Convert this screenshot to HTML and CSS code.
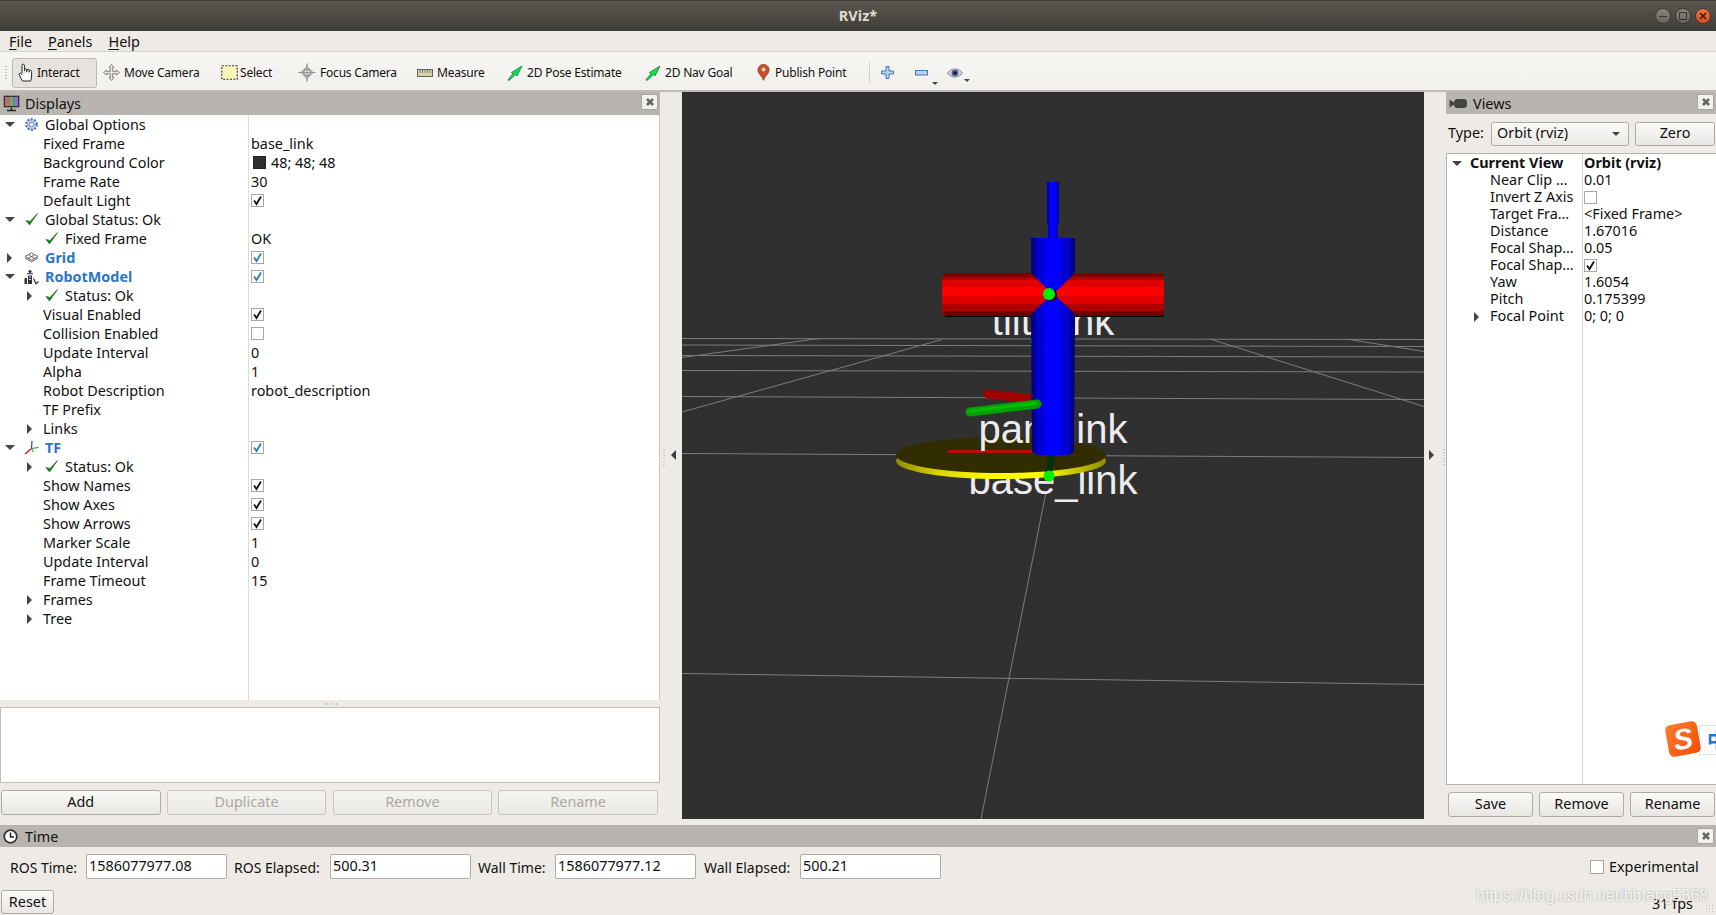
FILE: index.html
```html
<!DOCTYPE html>
<html lang="en">
<head>
<meta charset="utf-8">
<title>RViz*</title>
<link rel="stylesheet" href="styles.css">
</head>
<body>
<svg class="defs" width="0" height="0">
  <symbol id="ok" viewBox="0 0 15 15"><path d="M2 8.500 L5.500 13 L13.500 1.500 L6 9.500 Z" fill="#1f7a25" stroke="#1f7a25" stroke-width=".8"/></symbol>
  <symbol id="close" viewBox="0 0 10 10"><path d="M2 2 L8 8 M8 2 L2 8" stroke="#666" stroke-width="2.6"/></symbol>
  <symbol id="tick" viewBox="0 0 13 13"><path d="M3 6.500 L5.500 10 L10 2.500" fill="none" stroke="currentColor" stroke-width="1.8"/></symbol>
  <symbol id="navarrow" viewBox="0 0 16 16"><path d="M1 15 L6 8.500 L4.500 7.500 L15 1 L10 11 L8.500 9.500 L2 15.500 Z" fill="#0ee04a" stroke="#0b6b22" stroke-width=".7"/></symbol>
</svg>

<header class="titlebar">
  <span class="title">RViz*</span>
  <div class="winbtns">
    <span class="wb"><i class="wb-min"></i></span>
    <span class="wb"><i class="wb-max"></i></span>
    <span class="wb wb-close">
      <svg width="10" height="10" viewBox="0 0 10 10"><path d="M2 2 L8 8 M8 2 L2 8" stroke="#3a2010" stroke-width="1.6"/></svg>
    </span>
  </div>
</header>

<nav class="menubar">
  <span class="menu"><u>F</u>ile</span>
  <span class="menu"><u>P</u>anels</span>
  <span class="menu"><u>H</u>elp</span>
</nav>

<div class="toolbar">
  <span class="grip"></span>
  <div class="tools">
    <div class="tool-cell"><div class="tool active">
      <svg width="17" height="19" viewBox="0 0 17 19"><path d="M4 10 V2.400 a1.200 1.200 0 0 1 2.400 0 V8 M6.400 7 a1.200 1.200 0 0 1 2.400 0 V9 M8.800 7.600 a1.200 1.200 0 0 1 2.400 0 V9.400 M11.200 8.400 a1.200 1.200 0 0 1 2.400 0 V14 l-1 4 H4.500 L1 11.500 a1.200 1.200 0 0 1 2-1 L4 12" fill="#fff" stroke="#222" stroke-width="1"/></svg>
      <span>Interact</span></div></div>
    <div class="tool">
      <svg width="17" height="17" viewBox="0 0 17 17"><path d="M8.500 .5 L11 3.500 H9.700 V7.300 H13.500 V6 L16.500 8.500 L13.500 11 V9.700 H9.700 V13.500 H11 L8.500 16.500 L6 13.500 H7.300 V9.700 H3.500 V11 L.5 8.500 L3.500 6 V7.300 H7.300 V3.500 H6 Z" fill="#e8e8e8" stroke="#777" stroke-width=".9"/></svg>
      <span>Move Camera</span></div>
    <div class="tool tool-sel">
      <svg width="17" height="15" viewBox="0 0 17 15"><rect x=".8" y=".8" width="15.400" height="13.400" fill="#fbf6b8" stroke="#333" stroke-width="1.100" stroke-dasharray="2 1.400"/></svg>
      <span>Select</span></div>
    <div class="tool">
      <svg width="18" height="19" viewBox="0 0 18 19"><path d="M9 .5 V18.500 M.5 9.500 H17.500" stroke="#888" stroke-width="1.200"/><path d="M9 3.500 L15 9.500 L9 15.500 L3 9.500 Z" fill="#e6e6e6" stroke="#888"/><circle cx="9" cy="9.500" r="3.400" fill="none" stroke="#777"/><path d="M9 4 V15 M3.500 9.500 H14.500" stroke="#888" stroke-width=".8"/></svg>
      <span>Focus Camera</span></div>
    <div class="tool">
      <svg width="16" height="8" viewBox="0 0 16 8"><rect x=".5" y=".5" width="15" height="7" fill="#d8d2a6" stroke="#666"/><path d="M3 1 V4 M5.500 1 V4 M8 1 V4 M10.500 1 V4 M13 1 V4" stroke="#666" stroke-width=".8"/></svg>
      <span>Measure</span></div>
    <div class="tool">
      <svg width="16" height="16"><use href="#navarrow"/></svg>
      <span>2D Pose Estimate</span></div>
    <div class="tool">
      <svg width="16" height="16"><use href="#navarrow"/></svg>
      <span>2D Nav Goal</span></div>
    <div class="tool tool-pin">
      <svg width="13" height="17" viewBox="0 0 13 17"><path d="M6.500 16.500 C5 12 .8 9.500 .8 6 a5.700 5.700 0 0 1 11.400 0 C12.200 9.500 8 12 6.500 16.500 Z" fill="#c4502c" stroke="#7c3a1c" stroke-width=".6"/><circle cx="6.500" cy="5.500" r="2" fill="#f0d0b8"/></svg>
      <span>Publish Point</span></div>
    <span class="tool-sep"></span>
    <div class="tool-icon">
      <svg width="13" height="13" viewBox="0 0 13 13"><path d="M5 .5 H8 V5 H12.500 V8 H8 V12.500 H5 V8 H.5 V5 H5 Z" fill="#b8d0ec" stroke="#3d78b8"/></svg></div>
    <div class="tool-icon">
      <svg width="13" height="6" viewBox="0 0 13 6"><rect x=".5" y=".5" width="12" height="4.500" fill="#b8d0ec" stroke="#3d78b8"/></svg><b class="drop"></b></div>
    <div class="tool-icon">
      <svg width="16" height="12" viewBox="0 0 16 12"><path d="M.5 6 C4 .5 12 .5 15.500 6 C12 11.500 4 11.500 .5 6 Z" fill="#c9cfdc" stroke="#8a93a8"/><circle cx="8" cy="6" r="3.300" fill="#4a5a8a"/><circle cx="8" cy="6" r="1.400" fill="#111"/></svg><b class="drop"></b></div>
  </div>
</div>

<main class="main">
  <section class="left">
    <div class="dock-head">
      <svg class="dock-ico" width="17" height="17" viewBox="0 0 17 17"><rect x=".7" y=".7" width="15.600" height="11.600" fill="#333"/><rect x="2" y="2" width="4.400" height="9" fill="#c86a6a"/><rect x="6.400" y="2" width="4.300" height="9" fill="#6fae6f"/><rect x="10.700" y="2" width="4.300" height="9" fill="#7c7cc4"/><path d="M8.500 12.500 V15 M4 15.500 H13" stroke="#222" stroke-width="1.600"/></svg>
      <span class="dock-title">Displays</span>
      <span class="closebtn"><svg width="10" height="10"><use href="#close"/></svg></span>
    </div>
    <div class="tree tree-displays">
      <div class="row"><span class="name i0"><b class="tw down"></b><svg class="ico" width="15" height="15" viewBox="0 0 15 15"><circle cx="7.500" cy="7.500" r="5.200" fill="#d8e4f6" stroke="#4a78c8" stroke-width="2.400" stroke-dasharray="2 1.300"/><circle cx="7.500" cy="7.500" r="2.400" fill="#fff" stroke="#4a78c8"/></svg>Global Options</span></div>
      <div class="row"><span class="name p">Fixed Frame</span><span class="val">base_link</span></div>
      <div class="row"><span class="name p">Background Color</span><span class="val"><i class="swatch"></i>48; 48; 48</span></div>
      <div class="row"><span class="name p">Frame Rate</span><span class="val">30</span></div>
      <div class="row"><span class="name p">Default Light</span><span class="val"><span class="cb"><svg width="13" height="13"><use href="#tick"/></svg></span></span></div>
      <div class="row"><span class="name i0"><b class="tw down"></b><svg class="ico" width="15" height="15"><use href="#ok"/></svg>Global Status: Ok</span></div>
      <div class="row"><span class="name i1"><b class="tw"></b><svg class="ico" width="15" height="15"><use href="#ok"/></svg>Fixed Frame</span><span class="val">OK</span></div>
      <div class="row"><span class="name i0 strong"><b class="tw right"></b><svg class="ico" width="15" height="11" viewBox="0 0 15 11"><path d="M7.500 .8 L14 4.500 L7.500 8.200 L1 4.500 Z M4.500 2.800 L11 6.500 M10.500 2.800 L4 6.500 M1 6 L7.500 9.800 L14 6" fill="none" stroke="#555" stroke-width=".9"/></svg>Grid</span><span class="val"><span class="cb blue"><svg width="13" height="13"><use href="#tick"/></svg></span></span></div>
      <div class="row"><span class="name i0 strong"><b class="tw down"></b><svg class="ico" width="15" height="16" viewBox="0 0 15 16"><circle cx="6" cy="2.500" r="1.600" fill="#335"/><path d="M3 4.700 H9" stroke="#335" stroke-width="1"/><path d="M.5 15 V9 H3 V15 Z M4 15 V6.500 H8 V15 Z" fill="#333"/><path d="M5 8 H7 M5 10.500 H7" stroke="#fff" stroke-width=".8"/><path d="M9.500 9.500 L12 14.800 L14.500 12.500" fill="none" stroke="#333" stroke-width="1.200"/></svg>RobotModel</span><span class="val"><span class="cb blue"><svg width="13" height="13"><use href="#tick"/></svg></span></span></div>
      <div class="row"><span class="name i1"><b class="tw right"></b><svg class="ico" width="15" height="15"><use href="#ok"/></svg>Status: Ok</span></div>
      <div class="row"><span class="name p">Visual Enabled</span><span class="val"><span class="cb"><svg width="13" height="13"><use href="#tick"/></svg></span></span></div>
      <div class="row"><span class="name p">Collision Enabled</span><span class="val"><span class="cb"></span></span></div>
      <div class="row"><span class="name p">Update Interval</span><span class="val">0</span></div>
      <div class="row"><span class="name p">Alpha</span><span class="val">1</span></div>
      <div class="row"><span class="name p">Robot Description</span><span class="val">robot_description</span></div>
      <div class="row"><span class="name p">TF Prefix</span></div>
      <div class="row"><span class="name i1 t"><b class="tw right"></b>Links</span></div>
      <div class="row"><span class="name i0 strong"><b class="tw down"></b><svg class="ico" width="15" height="15" viewBox="0 0 15 15"><path d="M7.500 8.500 L14.500 7.500" stroke="#1a9a3a" stroke-width="1.200"/><path d="M7.500 8.500 L8 1" stroke="#2a3ac8" stroke-width="1.200"/><path d="M7.500 8.500 L1 14" stroke="#d81818" stroke-width="1.400"/><path d="M7.500 8.500 L9.500 12" stroke="#1fc81f" stroke-width="1.200"/></svg>TF</span><span class="val"><span class="cb blue"><svg width="13" height="13"><use href="#tick"/></svg></span></span></div>
      <div class="row"><span class="name i1"><b class="tw right"></b><svg class="ico" width="15" height="15"><use href="#ok"/></svg>Status: Ok</span></div>
      <div class="row"><span class="name p">Show Names</span><span class="val"><span class="cb"><svg width="13" height="13"><use href="#tick"/></svg></span></span></div>
      <div class="row"><span class="name p">Show Axes</span><span class="val"><span class="cb"><svg width="13" height="13"><use href="#tick"/></svg></span></span></div>
      <div class="row"><span class="name p">Show Arrows</span><span class="val"><span class="cb"><svg width="13" height="13"><use href="#tick"/></svg></span></span></div>
      <div class="row"><span class="name p">Marker Scale</span><span class="val">1</span></div>
      <div class="row"><span class="name p">Update Interval</span><span class="val">0</span></div>
      <div class="row"><span class="name p">Frame Timeout</span><span class="val">15</span></div>
      <div class="row"><span class="name i1 t"><b class="tw right"></b>Frames</span></div>
      <div class="row"><span class="name i1 t"><b class="tw right"></b>Tree</span></div>
    </div>
    <div class="hsplit"><i class="dots-h"></i></div>
    <div class="desc"></div>
    <div class="btnrow btnrow-left">
      <button class="btn">Add</button>
      <button class="btn off">Duplicate</button>
      <button class="btn off">Remove</button>
      <button class="btn off">Rename</button>
    </div>
  </section>

  <div class="vsplit"><i class="dots-v"></i><b class="hide-l"></b></div>

  <div class="viewport">
    <svg class="scene" width="742" height="727" viewBox="0 0 742 727">
      <defs>
        <clipPath id="blueclip"><path d="M349 146 H393 V181 L371 202 L393 222 L392 360 L386 363 H356 L350 360 L349 222 L371 202 L349 181 Z"/></clipPath>
        <linearGradient id="band" x1="0" x2="1" y1="0" y2="0">
          <stop offset="0" stop-color="#8f8a00"/><stop offset=".2" stop-color="#d8d400"/><stop offset=".45" stop-color="#ffff00"/><stop offset=".7" stop-color="#ffff00"/><stop offset=".85" stop-color="#c8c400"/><stop offset="1" stop-color="#8f8a00"/>
        </linearGradient>
      </defs>
      <g class="gridl">
        <path d="M0 246.500 L742 247.500 M0 253 L742 254.500 M0 263.500 L742 265 M0 278.500 L742 280 M0 304.500 L742 307.500 M0 361.500 L742 365.500 M0 581.500 L742 592.500"/>
        <path d="M0 265.500 L137 246.500 M0 320 L260 247.500 M528 247 L742 314.500 M664 247 L742 259.500 M364 400 L299 727"/>
      </g>
      <text class="label" x="371" y="243" text-anchor="middle">tilt_link</text>
      <text class="label" x="371" y="402" text-anchor="middle">base_link</text>
      <ellipse cx="319" cy="369" rx="105" ry="18" fill="url(#band)"/>
      <ellipse cx="319" cy="363" rx="105" ry="18" fill="#322d00"/>
      <path d="M266 359.500 H351" stroke="#e00000" stroke-width="2.500"/>
      <text class="label" x="371" y="351" text-anchor="middle">pan_link</text>
      <path d="M306 302 L351 307" stroke="#a00000" stroke-width="9" stroke-linecap="round"/>
      <g>
        <rect x="260" y="185" width="222" height="38" fill="#b00000"/>
        <rect x="262" y="181" width="220" height="5" fill="#800000"/>
        <rect x="260" y="185" width="222" height="3" fill="#b00000"/>
        <rect x="260" y="188" width="222" height="7" fill="#e00000"/>
        <rect x="260" y="195" width="222" height="9" fill="#ff0000"/>
        <rect x="260" y="204" width="222" height="8" fill="#e00000"/>
        <rect x="260" y="212" width="222" height="7" fill="#b00000"/>
        <rect x="262" y="219" width="220" height="5" fill="#700000"/>
        <rect x="263" y="224" width="218" height="1" fill="#000"/>
      </g>
      <rect x="365" y="90" width="12" height="41" fill="#0000a0"/>
      <rect x="367" y="90" width="8" height="41" fill="#0000ff"/>
      <rect x="366" y="131" width="10" height="15" fill="#0000d0"/>
      <rect x="368" y="131" width="6" height="15" fill="#0000ff"/>
      <g clip-path="url(#blueclip)">
        <rect x="349" y="146" width="44" height="218" fill="#000088"/>
        <rect x="354" y="146" width="34" height="218" fill="#0000d0"/>
        <rect x="362" y="146" width="17" height="218" fill="#0000ff"/>
      </g>
      <path d="M288 320 L355 312" stroke="#00a000" stroke-width="9" stroke-linecap="round"/>
      <path d="M288 319 L355 311" stroke="#00c000" stroke-width="3"/>
      <path d="M369.700 363 L366 383" stroke="#0a3010" stroke-width="7"/>
      <circle cx="369" cy="203" r="6" fill="#000"/>
      <circle cx="367" cy="202" r="6" fill="#00f000"/>
      <circle cx="367" cy="384" r="5.500" fill="#00f000"/>
    </svg>
  </div>

  <div class="vsplit vsplit-r"><b class="hide-r"></b><i class="dots-v"></i></div>

  <section class="right">
    <div class="dock-head dock-views">
      <svg class="dock-ico" width="18" height="11" viewBox="0 0 18 11"><path d="M.5 1.500 L5 4.500 V6.500 L.5 9.500 Z" fill="#444"/><rect x="5" y="1" width="13" height="9" rx="3.500" fill="#444"/></svg>
      <span class="dock-title">Views</span>
      <span class="closebtn"><svg width="10" height="10"><use href="#close"/></svg></span>
    </div>
    <div class="typerow">
      <span class="typelabel">Type:</span>
      <div class="combo"><span>Orbit (rviz)</span><b class="drop-c"></b></div>
      <button class="btn zero">Zero</button>
    </div>
    <div class="tree tree-views">
      <div class="vrow boldrow"><span class="vname v0"><b class="tw down"></b>Current View</span><span class="vval">Orbit (rviz)</span></div>
      <div class="vrow"><span class="vname">Near Clip …</span><span class="vval">0.01</span></div>
      <div class="vrow"><span class="vname">Invert Z Axis</span><span class="vval"><span class="cb"></span></span></div>
      <div class="vrow"><span class="vname">Target Fra…</span><span class="vval">&lt;Fixed Frame&gt;</span></div>
      <div class="vrow"><span class="vname">Distance</span><span class="vval">1.67016</span></div>
      <div class="vrow"><span class="vname">Focal Shap…</span><span class="vval">0.05</span></div>
      <div class="vrow"><span class="vname">Focal Shap…</span><span class="vval"><span class="cb"><svg width="13" height="13"><use href="#tick"/></svg></span></span></div>
      <div class="vrow"><span class="vname">Yaw</span><span class="vval">1.6054</span></div>
      <div class="vrow"><span class="vname">Pitch</span><span class="vval">0.175399</span></div>
      <div class="vrow"><span class="vname v1"><b class="tw right"></b>Focal Point</span><span class="vval">0; 0; 0</span></div>
      <div class="ime"><span class="ime-zh">中</span><span class="ime-s">S</span></div>
    </div>
    <div class="btnrow btnrow-right">
      <button class="btn">Save</button>
      <button class="btn">Remove</button>
      <button class="btn">Rename</button>
    </div>
  </section>
</main>

<section class="time">
  <div class="dock-head dock-time">
    <svg class="dock-ico" width="15" height="15" viewBox="0 0 15 15"><circle cx="7.500" cy="7.500" r="6.300" fill="#fff" stroke="#333" stroke-width="1.800"/><path d="M7.500 3.500 V8 H11" fill="none" stroke="#222" stroke-width="1.500"/></svg>
    <span class="dock-title">Time</span>
    <span class="closebtn"><svg width="10" height="10"><use href="#close"/></svg></span>
  </div>
  <div class="timerow">
    <span class="tl tl1">ROS Time:</span><span class="field">1586077977.08</span>
    <span class="tl tl2">ROS Elapsed:</span><span class="field">500.31</span>
    <span class="tl tl3">Wall Time:</span><span class="field">1586077977.12</span>
    <span class="tl tl4">Wall Elapsed:</span><span class="field">500.21</span>
    <span class="exp"><span class="cb cb-exp"></span><span class="exp-text">Experimental</span></span>
  </div>
  <div class="statusrow">
    <button class="btn reset">Reset</button>
    <span class="fps">31 fps</span>
    <i class="sizegrip"></i>
  </div>
</section>
<div class="watermark">https://blog.csdn.net/bbtang5568</div>
</body>
</html>
```
FILE: styles.css
```css
* { box-sizing: border-box; }
html, body { margin: 0; height: 915px; width: 1716px; overflow: hidden; }
body {
  position: relative;
  background: #eeebe6;
  color: #111;
  font: 14.4px/1 "Noto Sans", "Open Sans", sans-serif;
}
.defs { position: absolute; }

.titlebar {
  height: 31px;
  display: flex; align-items: center; justify-content: center;
  position: relative;
  background: linear-gradient(#35332f 0, #5a574f 4%, #403e39 100%);
}
.title { color: #dfdbd2; font-weight: 700; font-size: 14.5px; }
.winbtns { position: absolute; right: 5px; top: 8px; display: flex; gap: 4px; }
.wb {
  width: 16px; height: 16px; border-radius: 50%;
  display: flex; align-items: center; justify-content: center;
  background: linear-gradient(#8a877f, #66635c);
  border: 1px solid #3c3a35;
}
.wb-min { width: 8px; height: 1px; background: #37352f; }
.wb-max { width: 8px; height: 8px; border: 1px solid #37352f; }
.wb-close { background: linear-gradient(#f0703c, #d94f1c); }

.menubar {
  height: 21px; display: flex; gap: 16px; padding: 2px 0 0 9px; align-items: center;
  border-bottom: 1px solid #d6d3ce;
  background: #eeebe6;
}
.menu u { text-underline-offset: 2px; }

.toolbar {
  height: 40px; position: relative;
  background: linear-gradient(#f7f6f3, #f2f0ec);
  border-bottom: 2px solid #bfbcb7;
  font-size: 12px;
  letter-spacing: -.2px;
}
.grip {
  position: absolute; left: 4px; top: 13px; width: 4px; height: 16px;
  background: radial-gradient(circle, #bbb 0.7px, transparent 1px) 0 0 / 4px 3px;
}
.tools {
  padding: 3px 0 0 12px; height: 38px;
  display: grid; align-items: center;
  grid-template-columns: 91px 118px 77px 119px 90px 138px 112px 112px 12px 34px 32px 30px;
}
.tool, .tool-icon { display: flex; align-items: center; gap: 4px; position: relative; }
.tool-pin { gap: 5px; }
.tool-sel { gap: 2px; }
.tool.active {
  width: 85px; height: 30px; padding-left: 5px; gap: 2px;
  background: #e6e3de; border: 1px solid #bdbab4; border-radius: 3px;
}
.tool-sep { width: 1px; height: 21px; background: #d2cfca; }
.drop {
  position: absolute; left: 17px; top: 12px;
  border: 3px solid transparent; border-top: 3px solid #444; border-bottom: 0;
}

.main { height: 728px; display: flex; }
.left { width: 660px; display: flex; flex-direction: column; }
.right { width: 270px; display: flex; flex-direction: column; }

.dock-head {
  height: 23px; background: #b8b4af; display: flex; align-items: center;
  position: relative; padding-left: 3px; gap: 5px;
}
.dock-title { padding-top: 2px; }
.dock-views { height: 22px; }
.dock-ico { flex: none; }
.closebtn {
  position: absolute; right: 2px; top: 2px; width: 17px; height: 16px;
  background: #f3f1ee; border: 1px solid #a9a6a0; border-radius: 2px;
  display: flex; align-items: center; justify-content: center;
}
.dock-time .closebtn { top: 3px; }

.tree {
  background: linear-gradient(#dcdcdc, #dcdcdc) 248px 0 / 1px 100% no-repeat #fff;
}
.tree-displays { height: 585px; border-right: 1px solid #c8c5c0; }
.row { height: 19px; display: flex; align-items: center; white-space: nowrap; }
.name { width: 251px; display: flex; align-items: center; flex: none; padding-top: 2px; }
.name .tw, .name .ico { margin-top: -2px; }
.p { padding-left: 43px; }
.i0 { padding-left: 2px; }
.i1 { padding-left: 22px; }
.t .tw { margin-right: 5px; }
.strong { color: #2b75c4; font-weight: 700; }
.val { display: flex; align-items: center; padding-top: 2px; }
.val .cb, .val .swatch { margin-top: -2px; }
.tw { width: 16px; height: 10px; flex: none; display: block; position: relative; }
.tw.down::before {
  content: ""; position: absolute; left: 3px; top: 2px;
  border: 5px solid transparent; border-top: 5px solid #444; border-bottom: 0;
}
.tw.right::before {
  content: ""; position: absolute; left: 5px; top: 0;
  border: 5px solid transparent; border-left: 5px solid #444; border-right: 0;
}
.ico { margin: 0 6px; flex: none; }
.swatch { width: 13px; height: 13px; background: #303030; border: 1px solid #222; margin: -2px 5px 0 2px; display: block; }
.cb {
  width: 13px; height: 13px; display: block; background: #fff;
  border: 1px solid #aaa7a2; color: #111; position: relative;
}
.cb svg { position: absolute; left: -1px; top: -1px; }
.cb.blue { color: #2b75c4; }

.hsplit { height: 7px; display: flex; justify-content: center; align-items: center; }
.dots-h { width: 14px; height: 2px; background: radial-gradient(circle, #c2bfba .7px, transparent 1px) 0 0 / 3px 2px; }
.desc { height: 76px; background: #fff; border: 1px solid #c0bdb8; }
.btnrow { display: flex; }
.btnrow-left { margin-top: 7px; padding-left: 1px; gap: 6.3px; }
.btnrow-left .btn { width: 159.5px; }
.btn {
  height: 25px; padding: 0; font: inherit; color: #111;
  background: linear-gradient(#fbfaf9, #e8e6e2);
  border: 1px solid #aeaba6; border-radius: 3px;
}
.btn.off { color: #aba8a3; border-color: #c9c6c1; background: linear-gradient(#f5f4f1, #ebe9e5); }

.vsplit { width: 22px; position: relative; }
.dots-v {
  position: absolute; left: 3px; top: 356px; width: 2px; height: 18px;
  background: radial-gradient(circle, #c8c5c0 .7px, transparent 1px) 0 0 / 2px 3px;
}
.vsplit-r .dots-v { left: 19px; }
.hide-l, .hide-r { position: absolute; top: 358px; border: 5px solid transparent; }
.hide-l { left: 11px; border-right: 5px solid #3c3c3c; border-left: 0; }
.hide-r { left: 5px; border-left: 5px solid #3c3c3c; border-right: 0; }

.viewport { width: 742px; height: 727px; background: #303030; overflow: hidden; }
.scene { display: block; }
.gridl path { stroke: #7d7d7d; stroke-width: 1; fill: none; }
.label { font: 40px "Liberation Sans", Arial, sans-serif; fill: #ececec; }

.dock-views { padding-left: 3px; gap: 6px; }
.typerow { height: 39px; display: flex; align-items: center; padding-left: 2px; }
.typelabel { width: 43px; }
.combo {
  width: 138px; height: 24px; display: flex; align-items: center; justify-content: space-between;
  padding: 0 8px 0 5px;
  background: linear-gradient(#fbfaf9, #ebe9e5);
  border: 1px solid #aeaba6; border-radius: 3px;
}
.drop-c { border: 4px solid transparent; border-top: 4px solid #444; border-bottom: 0; }
.zero { width: 80px; height: 24px; margin-left: 6px; }
.tree-views {
  height: 632px; position: relative; padding-top: 1px;
  border: 1px solid #b8b5b0;
  border-right: 0;
  background: linear-gradient(#d4d4d4, #d4d4d4) 135px 0 / 1px 100% no-repeat #fff;
}
.vrow { height: 17px; display: flex; align-items: center; white-space: nowrap; }
.vname { width: 137px; padding-left: 43px; display: flex; align-items: center; flex: none; }
.v0 { padding-left: 2px; }
.v0 .tw { margin-right: 5px; }
.v1 { padding-left: 22px; }
.v1 .tw { margin-right: 5px; }
.boldrow { font-weight: 700; }
.vval { display: flex; align-items: center; }
.ime { position: absolute; right: 0; top: 568px; width: 50px; height: 36px; }
.ime-s {
  position: absolute; left: 1px; top: 1px; width: 32px; height: 32px; border-radius: 5px;
  background: linear-gradient(135deg, #ff7a2a, #f44d08); color: #fff; font: italic 700 29px/32px "Liberation Sans", sans-serif;
  text-align: center; transform: rotate(-10deg);
}
.ime-zh {
  position: absolute; left: 33px; top: 3px; width: 17px; height: 30px; overflow: hidden;
  padding-left: 7px;
  background: #fff; border: 1px solid #d8e4f0; border-right: 0;
  color: #1f78d1; font: 700 20px/28px "Noto Sans CJK SC", sans-serif;
}
.btnrow-right { margin-top: 7px; padding-left: 2px; gap: 6px; }
.btnrow-right .btn { width: 85px; }

.time { height: 96px; margin-top: -1px; padding-top: 6px; position: relative; }
.dock-time { height: 22px; padding-left: 3px; gap: 7px; }
.timerow {
  height: 25px; margin-top: 7px; display: flex; align-items: center; padding-left: 10px; position: relative;
}
.tl { display: block; font-size: 14px; padding-top: 2px; }
.tl1 { width: 76px; }
.tl2 { width: 96px; margin-left: 7px; }
.tl3 { width: 77px; margin-left: 7px; }
.tl4 { width: 96px; margin-left: 8px; }
.field {
  width: 141px; height: 25px; display: flex; align-items: center; padding-left: 2px;
  background: #fff; border: 1px solid #aeaba6; border-radius: 2px;
}
.exp { position: absolute; left: 1590px; display: flex; align-items: center; gap: 5px; }
.exp-text { padding-top: 2px; }
.cb-exp { width: 14px; height: 14px; }
.statusrow { height: 24px; margin-top: 11px; position: relative; display: flex; }
.reset { width: 53px; height: 24px; margin-left: 1px; }
.fps { position: absolute; left: 1652px; top: 7px; }
.sizegrip {
  position: absolute; right: 1px; bottom: 0; width: 10px; height: 10px;
  background: radial-gradient(circle, #c2bfba .7px, transparent 1px) 0 0 / 3px 3px;
}
.watermark {
  position: absolute; left: 1476px; top: 887px; width: 232px; white-space: nowrap;
  font: 16px/18px "Liberation Sans", Arial, sans-serif;
  color: rgba(255,255,255,.9);
  text-shadow: 0 0 2px rgba(130,130,130,.8);
}
```
